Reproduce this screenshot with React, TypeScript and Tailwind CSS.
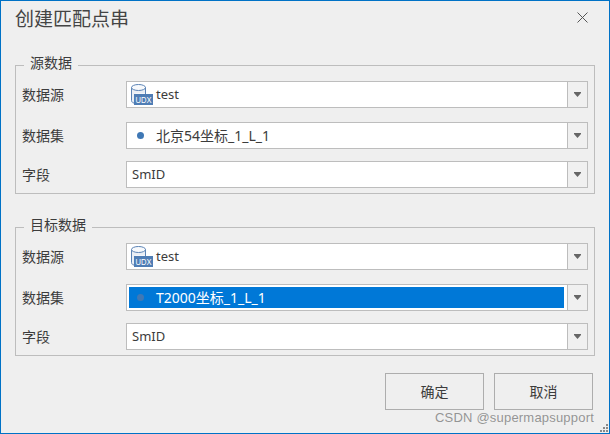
import React from 'react';

const font = '"Noto Sans", "Noto Sans CJK SC", sans-serif';

const UdxIcon = () => (
    <svg width="22" height="21" viewBox="0 0 22 21" className="shrink-0">
        <path d="M14.500 3.500v6H4.500v10H0.500v-16z" fill="#e9eef5" />
        <path d="M0.500 3.500v13c0 1.500 1.500 2.500 4 3" fill="none" stroke="#5b83b5" strokeWidth="1" />
        <ellipse cx="7.500" cy="3.500" rx="7" ry="3" fill="#f7f9fc" stroke="#5b83b5" strokeWidth="1" />
        <line x1="14.500" y1="3.500" x2="14.500" y2="10" stroke="#5b83b5" strokeWidth="1" />
        <rect x="3" y="10" width="19" height="11" fill="#4f7db5" />
        <text x="12.500" y="18.500" textAnchor="middle" fill="#ffffff" fontSize="8.500" fontFamily="Liberation Sans, sans-serif" textLength="16" lengthAdjust="spacingAndGlyphs">UDX</text>
    </svg>
);

const Dot = () => (
    <span className="flex w-[22px] shrink-0 justify-center">
        <span className="mr-[3px] h-[7px] w-[7px] rounded-full bg-[#3f78b5]" />
    </span>
);

const Arrow = () => (
    <span className="flex w-[20px] shrink-0 items-center justify-center border-l border-[#bdbdbd] bg-[#f0f0f0]">
        <svg width="7" height="5" viewBox="0 0 7 5">
            <path d="M0 0h7v1L3.500 5 0 1z" fill="#666666" />
        </svg>
    </span>
);

const Row = ({ label, className, children }: { label: string; className?: string; children: React.ReactNode }) => (
    <div className={`flex h-[27px] items-center pl-[6px] ${className ?? ''}`}>
        <span className="w-[104px] shrink-0 text-[14px] text-[#3c3c3c]">{label}</span>
        <div className="flex h-[27px] flex-1 border border-[#bdbdbd] bg-white">
            <div className="flex min-w-0 flex-1 items-center">{children}</div>
            <Arrow />
        </div>
    </div>
);

const Group = ({ title, selected, dataset, className }: { title: string; selected?: boolean; dataset: string; className?: string }) => (
    <fieldset className={`mx-[14px] h-[138px] border border-[#bdbdbd] pr-[6px] ${className ?? ''}`}>
        <legend className="ml-[8px] px-[6px] text-[14px] leading-[18px] text-[#3c3c3c]">
            <span className="block -translate-y-[2px]">{title}</span>
        </legend>
        <Row label="数据源" className="mt-[7px]">
            <span className="flex items-center pl-[4px] text-[13px] text-[#3c3c3c]">
                <UdxIcon />
                <span className="ml-[3px]">test</span>
            </span>
        </Row>
        <Row label="数据集" className="mt-[14px]">
            {selected ? (
                <span className="my-[2px] ml-[2px] mr-[3px] flex h-[21px] flex-1 items-center bg-[#0078d7] pl-[2px] text-[14px] text-white">
                    <Dot />
                    <span className="ml-[3px]">{dataset}</span>
                </span>
            ) : (
                <span className="flex items-center pl-[4px] text-[14px] text-[#3c3c3c]">
                    <Dot />
                    <span className="ml-[3px]">{dataset}</span>
                </span>
            )}
        </Row>
        <Row label="字段" className="mt-[12px]">
            <span className="pl-[5px] text-[13px] text-[#3c3c3c]">SmID</span>
        </Row>
    </fieldset>
);

export default function App() {
    return (
        <div
            className="relative h-[434px] w-[610px] overflow-hidden border border-[#0072c6] bg-[#efefef]"
            style={{ fontFamily: font }}
        >
            <div className="flex h-[55px] items-start justify-between pl-[14px] pr-[21px]">
                <h1 className="mt-[4px] text-[19px] leading-[28px] text-[#444444]">创建匹配点串</h1>
                <svg width="11" height="11" viewBox="0 0 11 11" className="mt-[11px]">
                    <path d="M0.500 0.500l10 10M10.500 0.500l-10 10" stroke="#555555" strokeWidth="1" />
                </svg>
            </div>
            <Group title="源数据" dataset="北京54坐标_1_L_1" />
            <Group title="目标数据" dataset="T2000坐标_1_L_1" selected className="mt-[24px]" />
            <div className="mt-[17px] flex justify-end gap-[10px] pr-[16px]">
                <button className="h-[37px] w-[99px] border border-[#adadad] text-[14px] text-[#3c3c3c]">确定</button>
                <button className="h-[37px] w-[99px] border border-[#adadad] text-[14px] text-[#3c3c3c]">取消</button>
            </div>
            <span className="absolute bottom-[7px] right-[15px] text-[13px] leading-[16px] tracking-[0.2px] text-[#6b6b6b]/70" style={{ fontFamily: '"Liberation Sans", sans-serif' }}>
                CSDN @supermapsupport
            </span>
            <svg width="9" height="9" viewBox="0 0 9 9" className="absolute bottom-0 right-0">
                <path d="M6 0h2v2H6zM3 3h2v2H3zM6 3h2v2H6zM0 6h2v2H0zM3 6h2v2H3zM6 6h2v2H6z" fill="#8a8a8a" />
            </svg>
        </div>
    );
}
